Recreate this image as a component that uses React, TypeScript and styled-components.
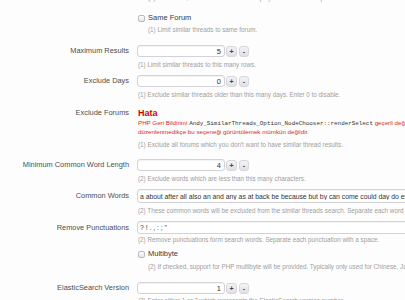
import React from "react";
import styled, { createGlobalStyle } from "styled-components";

const Global = createGlobalStyle`
  html, body { margin: 0; padding: 0; overflow: hidden; background: #fdfdfd; }
  body { font-family: "Liberation Sans", Arial, sans-serif; }
`;

const Page = styled.div`
  width: 405px;
  height: 300px;
  overflow: hidden;
  background: #fdfdfd;
  color: #333;
`;

const Row = styled.div<{ $gap: number }>`
  display: grid;
  grid-template-columns: 129px 1fr;
  column-gap: 8px;
  margin-top: ${(p) => p.$gap}px;
`;

const Label = styled.div<{ $h: number }>`
  text-align: right;
  font-size: 7.4px;
  line-height: ${(p) => p.$h}px;
  color: #4d4d4d;
  white-space: nowrap;
`;

const Control = styled.div`
  min-width: 0;
  display: flex;
  flex-direction: column;
  align-items: flex-start;
`;

const Hint = styled.div<{ $gap: number; $indent?: boolean }>`
  font-size: 6.3px;
  line-height: 8px;
  color: #9d9d9d;
  margin-top: ${(p) => p.$gap}px;
  padding-left: ${(p) => (p.$indent ? 11 : 1)}px;
  white-space: nowrap;
`;

const Spinner = styled.div`
  display: flex;
  align-items: center;
`;

const NumberInput = styled.input`
  width: 88px;
  height: 12px;
  box-sizing: border-box;
  margin: 0;
  border: 1px solid #d2d2d8;
  border-radius: 3px;
  background: #fff;
  box-shadow: inset 0 1px 1px rgba(0, 0, 0, 0.05);
  font-family: "Liberation Sans", Arial, sans-serif;
  font-size: 7.5px;
  text-align: right;
  padding: 0 3px 0 2px;
  color: #333;
  outline: none;
`;

const StepButton = styled.button<{ $w: number; $ml: number }>`
  width: ${(p) => p.$w}px;
  height: 11px;
  margin: 0 0 0 ${(p) => p.$ml}px;
  padding: 0;
  box-sizing: border-box;
  border: 1px solid #d6d6dc;
  border-radius: 3px;
  background: linear-gradient(#f4f4f6, #e0e0e5);
  font-family: "Liberation Sans", Arial, sans-serif;
  font-size: 7px;
  font-weight: bold;
  line-height: 9px;
  color: #444;
  text-align: center;
`;

const TextInput = styled.input<{ $h: number }>`
  width: 420px;
  height: ${(p) => p.$h}px;
  box-sizing: border-box;
  margin: 0;
  border: 1px solid #d2d2d8;
  border-radius: 3px;
  background: #fff;
  box-shadow: inset 0 1px 1px rgba(0, 0, 0, 0.05);
  font-family: "Liberation Sans", Arial, sans-serif;
  font-size: 6.8px;
  padding: 0 2px;
  color: #333;
  outline: none;
`;

const CheckLine = styled.label`
  display: flex;
  align-items: center;
  gap: 3px;
  margin-left: 1px;
  font-size: 7.5px;
  line-height: 10px;
  color: #3a3a3a;
`;

const Box = styled.span`
  width: 7px;
  height: 7px;
  box-sizing: border-box;
  border: 1px solid #b9b9c2;
  border-radius: 2px;
  background: linear-gradient(#ffffff, #e6e6ea);
`;

const ErrorTitle = styled.div`
  font-size: 9px;
  font-weight: bold;
  line-height: 10px;
  color: #d40000;
  margin-left: 1px;
`;

const ErrorText = styled.div<{ $gap: number }>`
  font-size: 6.2px;
  line-height: 8px;
  color: #d42a2a;
  white-space: nowrap;
  margin: ${(p) => p.$gap}px 0 0 1px;
`;

const Code = styled.span`
  font-family: "Liberation Mono", "Courier New", monospace;
  font-size: 5.9px;
  color: #333;
`;

type SpinProps = { value: string };
const NumberSpinner = ({ value }: SpinProps) => (
  <Spinner>
    <NumberInput readOnly value={value} />
    <StepButton $w={11} $ml={1}>+</StepButton>
    <StepButton $w={10} $ml={2}>-</StepButton>
  </Spinner>
);

export default function App() {
  return (
    <Page>
      <Global />
      <Row $gap={-6}>
        <div />
        <Control>
          <Hint $gap={0} $indent>(1) If checked, similar threads will be displayed below the first post.</Hint>
        </Control>
      </Row>

      <Row $gap={11}>
        <div />
        <Control>
          <CheckLine>
            <Box />
            Same Forum
          </CheckLine>
          <Hint $gap={3} $indent>(1) Limit similar threads to same forum.</Hint>
        </Control>
      </Row>

      <Row $gap={11}>
        <Label $h={12}>Maximum Results</Label>
        <Control>
          <NumberSpinner value="5" />
          <Hint $gap={4}>(1) Limit similar threads to this many rows.</Hint>
        </Control>
      </Row>

      <Row $gap={6}>
        <Label $h={12}>Exclude Days</Label>
        <Control>
          <NumberSpinner value="0" />
          <Hint $gap={4}>(1) Exclude similar threads older than this many days. Enter 0 to disable.</Hint>
        </Control>
      </Row>

      <Row $gap={9}>
        <Label $h={10}>Exclude Forums</Label>
        <Control>
          <ErrorTitle>Hata</ErrorTitle>
          <ErrorText $gap={1}>
            PHP Geri Bildirimi <Code>Andy_SimilarThreads_Option_NodeChooser::renderSelect</Code> geçerli değil. Bu geri bildirim
          </ErrorText>
          <ErrorText $gap={0}>düzenlenmedikçe bu seçeneği görüntülemek mümkün değildir.</ErrorText>
          <Hint $gap={5}>(1) Exclude all forums which you don't want to have similar thread results.</Hint>
        </Control>
      </Row>

      <Row $gap={10}>
        <Label $h={12}>Minimum Common Word Length</Label>
        <Control>
          <NumberSpinner value="4" />
          <Hint $gap={4}>(2) Exclude words which are less than this many characters.</Hint>
        </Control>
      </Row>

      <Row $gap={6}>
        <Label $h={14}>Common Words</Label>
        <Control>
          <TextInput
            $h={14}
            readOnly
            value="a about after all also an and any as at back be because but by can come could day do even first for from get give go good have he her him his how i if in into it its just know like look make me most my new no not now of on one only or other our out over people say see she so some take than that the their them then there these they think this time to two up us use want way we well what when which who will with work would year you your"
          />
          <Hint $gap={4}>(2) These common words will be excluded from the similar threads search. Separate each word with a space.</Hint>
        </Control>
      </Row>

      <Row $gap={6}>
        <Label $h={13}>Remove Punctuations</Label>
        <Control>
          <TextInput $h={13} readOnly value={'? ! . , : ; "'} />
          <Hint $gap={2}>(2) Remove punctuations form search words. Separate each punctuation with a space.</Hint>
        </Control>
      </Row>

      <Row $gap={5}>
        <div />
        <Control>
          <CheckLine>
            <Box />
            Multibyte
          </CheckLine>
          <Hint $gap={4} $indent>(2) If checked, support for PHP multibyte will be provided. Typically only used for Chinese, Japanese and Korean.</Hint>
        </Control>
      </Row>

      <Row $gap={11}>
        <Label $h={12}>ElasticSearch Version</Label>
        <Control>
          <NumberSpinner value="1" />
          <Hint $gap={3}>(2) Enter either 1 or 2 which represents the ElasticSearch version number.</Hint>
        </Control>
      </Row>
    </Page>
  );
}
